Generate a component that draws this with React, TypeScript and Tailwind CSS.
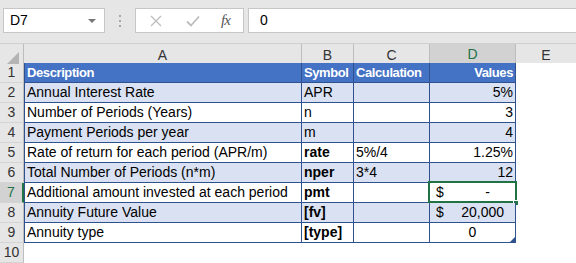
import React from 'react';

type Row = {
  a: string;
  b: string;
  bBold?: boolean;
  c: string;
  d: React.ReactNode;
  dAlign?: 'right' | 'center' | 'acct';
};

const rows: Row[] = [
  { a: 'Annual Interest Rate', b: 'APR', c: '', d: '5%' },
  { a: 'Number of Periods (Years)', b: 'n', c: '', d: '3' },
  { a: 'Payment Periods per year', b: 'm', c: '', d: '4' },
  { a: 'Rate of return for each period (APR/m)', b: 'rate', bBold: true, c: '5%/4', d: '1.25%' },
  { a: 'Total Number of Periods (n*m)', b: 'nper', bBold: true, c: '3*4', d: '12' },
  { a: 'Additional amount invested at each period', b: 'pmt', bBold: true, c: '', d: '-', dAlign: 'acct' },
  { a: 'Annuity Future Value', b: '[fv]', bBold: true, c: '', d: '20,000', dAlign: 'acct' },
  { a: 'Annuity type', b: '[type]', bBold: true, c: '', d: '0', dAlign: 'center' },
];

const cols = 'grid grid-cols-[24px_278px_52px_76px_86px_60px]';
const cell = 'h-[20px] flex items-center px-[2px] border-r border-b border-[#2f528f] overflow-hidden whitespace-nowrap';
const head = 'bg-[#4472c4] text-white font-bold text-[13px] tracking-[-0.4px]';

const RowHead = ({ n, active }: { n: number; active?: boolean }) => (
  <div
    className={`h-[20px] flex items-center justify-center border-b border-[#d4d4d4] ${
      active
        ? 'bg-[#d2d2d2] text-[#217346] border-r-2 border-r-[#217346]'
        : 'bg-[#e6e6e6] text-[#333] border-r border-r-[#bdbdbd]'
    }`}
  >
    {n}
  </div>
);

export default function App() {
  return (
    <div
      className="w-[576px] h-[263px] overflow-hidden bg-white text-[14px] text-black"
      style={{ fontFamily: '"Liberation Sans", Arial, sans-serif' }}
    >
      {/* formula bar */}
      <div className="h-[44px] bg-[#e6e6e6] flex pt-[8px] border-b border-[#d0d0d0]">
        <div className="ml-[3px] w-[102px] h-[25px] bg-white border border-[#c6c6c6] flex items-center justify-between pl-[6px] pr-[8px]">
          <span>D7</span>
          <span className="w-0 h-0 border-l-[4px] border-r-[4px] border-t-[4px] border-l-transparent border-r-transparent border-t-[#777]" />
        </div>
        <div className="w-[30px] h-[25px] flex flex-col items-center justify-center gap-[3px]">
          <span className="w-[2px] h-[2px] bg-[#a6a6a6]" />
          <span className="w-[2px] h-[2px] bg-[#a6a6a6]" />
          <span className="w-[2px] h-[2px] bg-[#a6a6a6]" />
        </div>
        <div className="w-[109px] h-[25px] bg-white border border-[#c6c6c6] flex items-center">
          <svg className="ml-[14px]" width="12" height="12" viewBox="0 0 12 12">
            <path d="M1 1L11 11M11 1L1 11" stroke="#bdbdbd" strokeWidth="1.3" fill="none" />
          </svg>
          <svg className="ml-[24px]" width="14" height="12" viewBox="0 0 14 12">
            <path d="M1 6.5L5 10.5L13 1.5" stroke="#bdbdbd" strokeWidth="1.8" fill="none" />
          </svg>
          <span
            className="ml-[21px] text-[#555] text-[15px] italic tracking-[-1px]"
            style={{ fontFamily: '"Liberation Serif", serif' }}
          >
            fx
          </span>
        </div>
        <div className="ml-[4px] flex-1 h-[25px] bg-white border-y border-l border-[#c6c6c6] flex items-center pl-[11px]">
          0
        </div>
      </div>

      {/* column headers */}
      <div className={`${cols} h-[19px] bg-[#e6e6e6] text-[#333]`}>
        <div className="relative border-r border-[#bdbdbd]">
          <svg className="absolute right-[4px] bottom-[3px]" width="12" height="12" viewBox="0 0 12 12">
            <path d="M12 0L12 12L0 12Z" fill="#b4b4b4" />
          </svg>
        </div>
        <div className="flex items-center justify-center border-r border-[#bdbdbd]">A</div>
        <div className="flex items-center justify-center border-r border-[#bdbdbd]">B</div>
        <div className="flex items-center justify-center border-r border-[#bdbdbd]">C</div>
        <div className="flex items-center justify-center bg-[#d2d2d2] text-[#217346] border-r border-[#bdbdbd] border-b-2 border-b-[#217346]">
          D
        </div>
        <div className="flex items-center justify-center">E</div>
      </div>

      {/* row 1 header */}
      <div className={cols}>
        <RowHead n={1} />
        <div className={`${cell} border-l ${head}`}>Description</div>
        <div className={`${cell} ${head}`}>Symbol</div>
        <div className={`${cell} ${head}`}>Calculation</div>
        <div className={`${cell} ${head} justify-end`}>Values</div>
        <div />
      </div>

      {rows.map((r, i) => {
        const band = i % 2 === 0 ? 'bg-[#d9e1f2]' : 'bg-white';
        const selected = i === 5;
        return (
          <div key={i} className={cols}>
            <RowHead n={i + 2} active={selected} />
            <div className={`${cell} border-l ${band}`}>{r.a}</div>
            <div className={`${cell} ${band} ${r.bBold ? 'font-bold' : ''}`}>{r.b}</div>
            <div className={`${cell} ${band}`}>{r.c}</div>
            <div
              className={`${cell} ${band} relative overflow-visible ${
                r.dAlign === 'center'
                  ? 'justify-center'
                  : r.dAlign === 'acct'
                  ? 'justify-between pl-[6px] pr-[11px]'
                  : 'justify-end'
              }`}
            >
              {r.dAlign === 'acct' ? (
                <>
                  <span>$</span>
                  <span className={r.d === '-' ? 'mr-[14px]' : ''}>{r.d}</span>
                </>
              ) : (
                r.d
              )}
              {selected && (
                <>
                  <span className="absolute left-[-2px] top-[-2px] right-[-2px] bottom-[-1px] border-2 border-[#217346] pointer-events-none" />
                  <span className="absolute right-[-4px] bottom-[-4px] w-[6px] h-[6px] bg-[#217346] border border-white" />
                </>
              )}
              {i === 7 && (
                <svg className="absolute right-0 bottom-0" width="5" height="5" viewBox="0 0 5 5">
                  <path d="M5 0L5 5L0 5Z" fill="#2f528f" />
                </svg>
              )}
            </div>
            <div />
          </div>
        );
      })}

      <div className={cols}>
        <RowHead n={10} />
        <div />
      </div>
    </div>
  );
}
